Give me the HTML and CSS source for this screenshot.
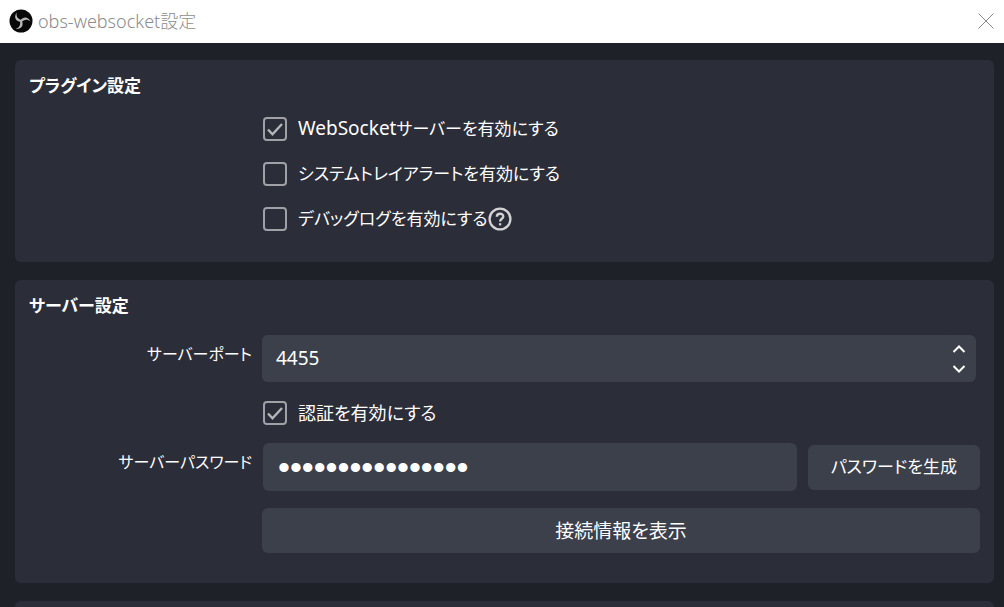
FILE: index.html
```html
<!DOCTYPE html>
<html lang="ja">
<head>
<meta charset="utf-8">
<title>obs-websocket設定</title>
<link rel="stylesheet" href="styles.css">
</head>
<body>
<div class="window">
  <header class="titlebar">
    <svg class="logo" viewBox="0 0 24 24" aria-hidden="true">
      <circle cx="12" cy="12" r="11.5" fill="#080808"/>
      <g fill="#b8b8b8">
        <path d="M10.8 11.3L13 12C14.8 16.4 12.6 20.4 6.8 20C10.5 18.6 12 16 10.8 11.3Z"/>
        <path d="M10.8 11.3L13 12C14.8 16.4 12.6 20.4 6.8 20C10.5 18.6 12 16 10.8 11.3Z" transform="rotate(120 12 12)"/>
        <path d="M10.8 11.3L13 12C14.8 16.4 12.6 20.4 6.8 20C10.5 18.6 12 16 10.8 11.3Z" transform="rotate(240 12 12)"/>
      </g>
    </svg>
    <h1 class="title">obs-websocket設定</h1>
    <button class="close" type="button" aria-label="閉じる">
      <svg viewBox="0 0 16 16" aria-hidden="true"><path d="M.5.5l15 15M15.5.5l-15 15"/></svg>
    </button>
  </header>
  <main class="content">
    <section class="card plugin">
      <h2 class="heading">プラグイン設定</h2>
      <div class="options">
        <label class="option"><input class="check" type="checkbox" checked><span><span class="latin">WebSocket</span>サーバーを有効にする</span></label>
        <label class="option"><input class="check" type="checkbox"><span>システムトレイアラートを有効にする</span></label>
        <div class="option-line">
          <label class="option"><input class="check" type="checkbox"><span>デバッグログを有効にする</span></label>
          <svg class="help" viewBox="0 0 24 24" role="img" aria-label="ヘルプ">
            <circle cx="12" cy="12" r="10.4"/>
            <path d="M8.8 9.8c0-4 6.5-4 6.5-.3 0 2.3-3.2 2.3-3.2 5"/>
            <path d="M12.1 16.2v2.2"/>
          </svg>
        </div>
      </div>
    </section>
    <section class="card server">
      <h2 class="heading">サーバー設定</h2>
      <div class="form">
        <label class="label" for="port">サーバーポート</label>
        <div class="spin">
          <input class="field" id="port" type="text" inputmode="numeric" value="4455">
          <div class="steps">
            <button class="step" type="button" aria-label="増やす"><svg viewBox="0 0 14 10" aria-hidden="true"><path d="M1.5 8L7 2.5 12.5 8"/></svg></button>
            <button class="step" type="button" aria-label="減らす"><svg viewBox="0 0 14 10" aria-hidden="true"><path d="M1.5 2L7 7.5 12.5 2"/></svg></button>
          </div>
        </div>
        <label class="option auth"><input class="check" type="checkbox" checked><span>認証を有効にする</span></label>
        <label class="label" for="password">サーバーパスワード</label>
        <div class="password-row">
          <input class="field password" id="password" type="password" value="abcdefghijklmnop">
          <button class="button" type="button">パスワードを生成</button>
        </div>
        <button class="button show" type="button">接続情報を表示</button>
      </div>
    </section>
    <section class="card next"></section>
  </main>
</div>
</body>
</html>
```
FILE: styles.css
```css
* { box-sizing: border-box; }

body {
  margin: 0;
  background: #1f2129;
  color: #fff;
  font: 17px/28px "Noto Sans", "Noto Sans CJK JP", sans-serif;
  font-feature-settings: "palt";
}

button, input { font: inherit; color: inherit; font-feature-settings: inherit; }

.window {
  display: flex;
  flex-direction: column;
  height: 100vh;
  overflow: hidden;
}

.titlebar {
  flex: none;
  display: flex;
  align-items: center;
  gap: 5px;
  height: 43px;
  padding: 0 10px 2px 9px;
  background: #fff;
}

.logo { width: 24px; height: 24px; }

.title {
  flex: 1;
  margin: 0;
  color: #8c8c8c;
  font-size: 18px;
  font-weight: 300;
}

.close {
  display: flex;
  padding: 0;
  border: 0;
  background: none;
}

.close svg { width: 16px; height: 16px; fill: none; stroke: #888; }

.content {
  display: flex;
  flex-direction: column;
  gap: 18px;
  padding: 17px 10px 0 15px;
}

.card {
  flex: none;
  padding: 12px 14px 30px;
  border-radius: 6px;
  background: #2b2d38;
}

.plugin { padding-bottom: 29px; }

.heading { margin: 0; font-size: 17px; font-weight: 700; }

.options {
  display: grid;
  gap: 17px;
  padding: 14px 0 0 234px;
}

.option, .option-line { display: flex; align-items: center; }

.option { gap: 11px; }

.latin { font-size: 19px; }

.check {
  appearance: none;
  flex: none;
  width: 24px;
  height: 24px;
  margin: 0;
  border: 2px solid #a0a1a6;
  border-radius: 4px;
}

.check:checked {
  background: url("data:image/svg+xml,%3Csvg xmlns='http://www.w3.org/2000/svg' viewBox='0 0 20 20'%3E%3Cpath d='M3 10.5l4.5 4.8L17 5' fill='none' stroke='%23b4b5b8' stroke-width='2.4'/%3E%3C/svg%3E") center / 20px;
}

.help {
  width: 24px;
  height: 24px;
  fill: none;
  stroke: #d3d3d5;
  stroke-width: 2.3;
}

.form {
  display: grid;
  grid-template-columns: 223px 1fr;
  column-gap: 10px;
  padding-top: 15px;
}

.label { padding-top: 5px; font-size: 16px; text-align: right; }

.spin {
  display: flex;
  margin-right: 4px;
  border-radius: 6px;
  background: #3c404b;
}

.field {
  flex: 1;
  min-width: 0;
  height: 47px;
  padding: 0 14px 2px;
  border: 0;
  border-radius: 6px;
  background: #3c404b;
  font-size: 19px;
}

.steps {
  display: flex;
  flex-direction: column;
  justify-content: center;
  gap: 10px;
  padding-right: 10px;
}

.step { display: flex; padding: 0; border: 0; background: none; }

.step svg { width: 14px; height: 10px; fill: none; stroke: #fff; stroke-width: 2; }

.auth { grid-column: 2; padding: 17px 0 16px 1px; font-size: 18px; }

.password-row {
  display: flex;
  align-items: center;
  gap: 11px;
}

.password {
  height: 48px;
  margin-left: 1px;
  padding: 0 15px;
  font-family: "Liberation Sans", sans-serif;
  font-size: 34px;
}

.button {
  height: 45px;
  padding: 0 23px;
  border: 0;
  border-radius: 6px;
  background: #3c404b;
}

.show { grid-column: 2; margin-top: 17px; font-size: 19px; }

.next { min-height: 80px; }
```
